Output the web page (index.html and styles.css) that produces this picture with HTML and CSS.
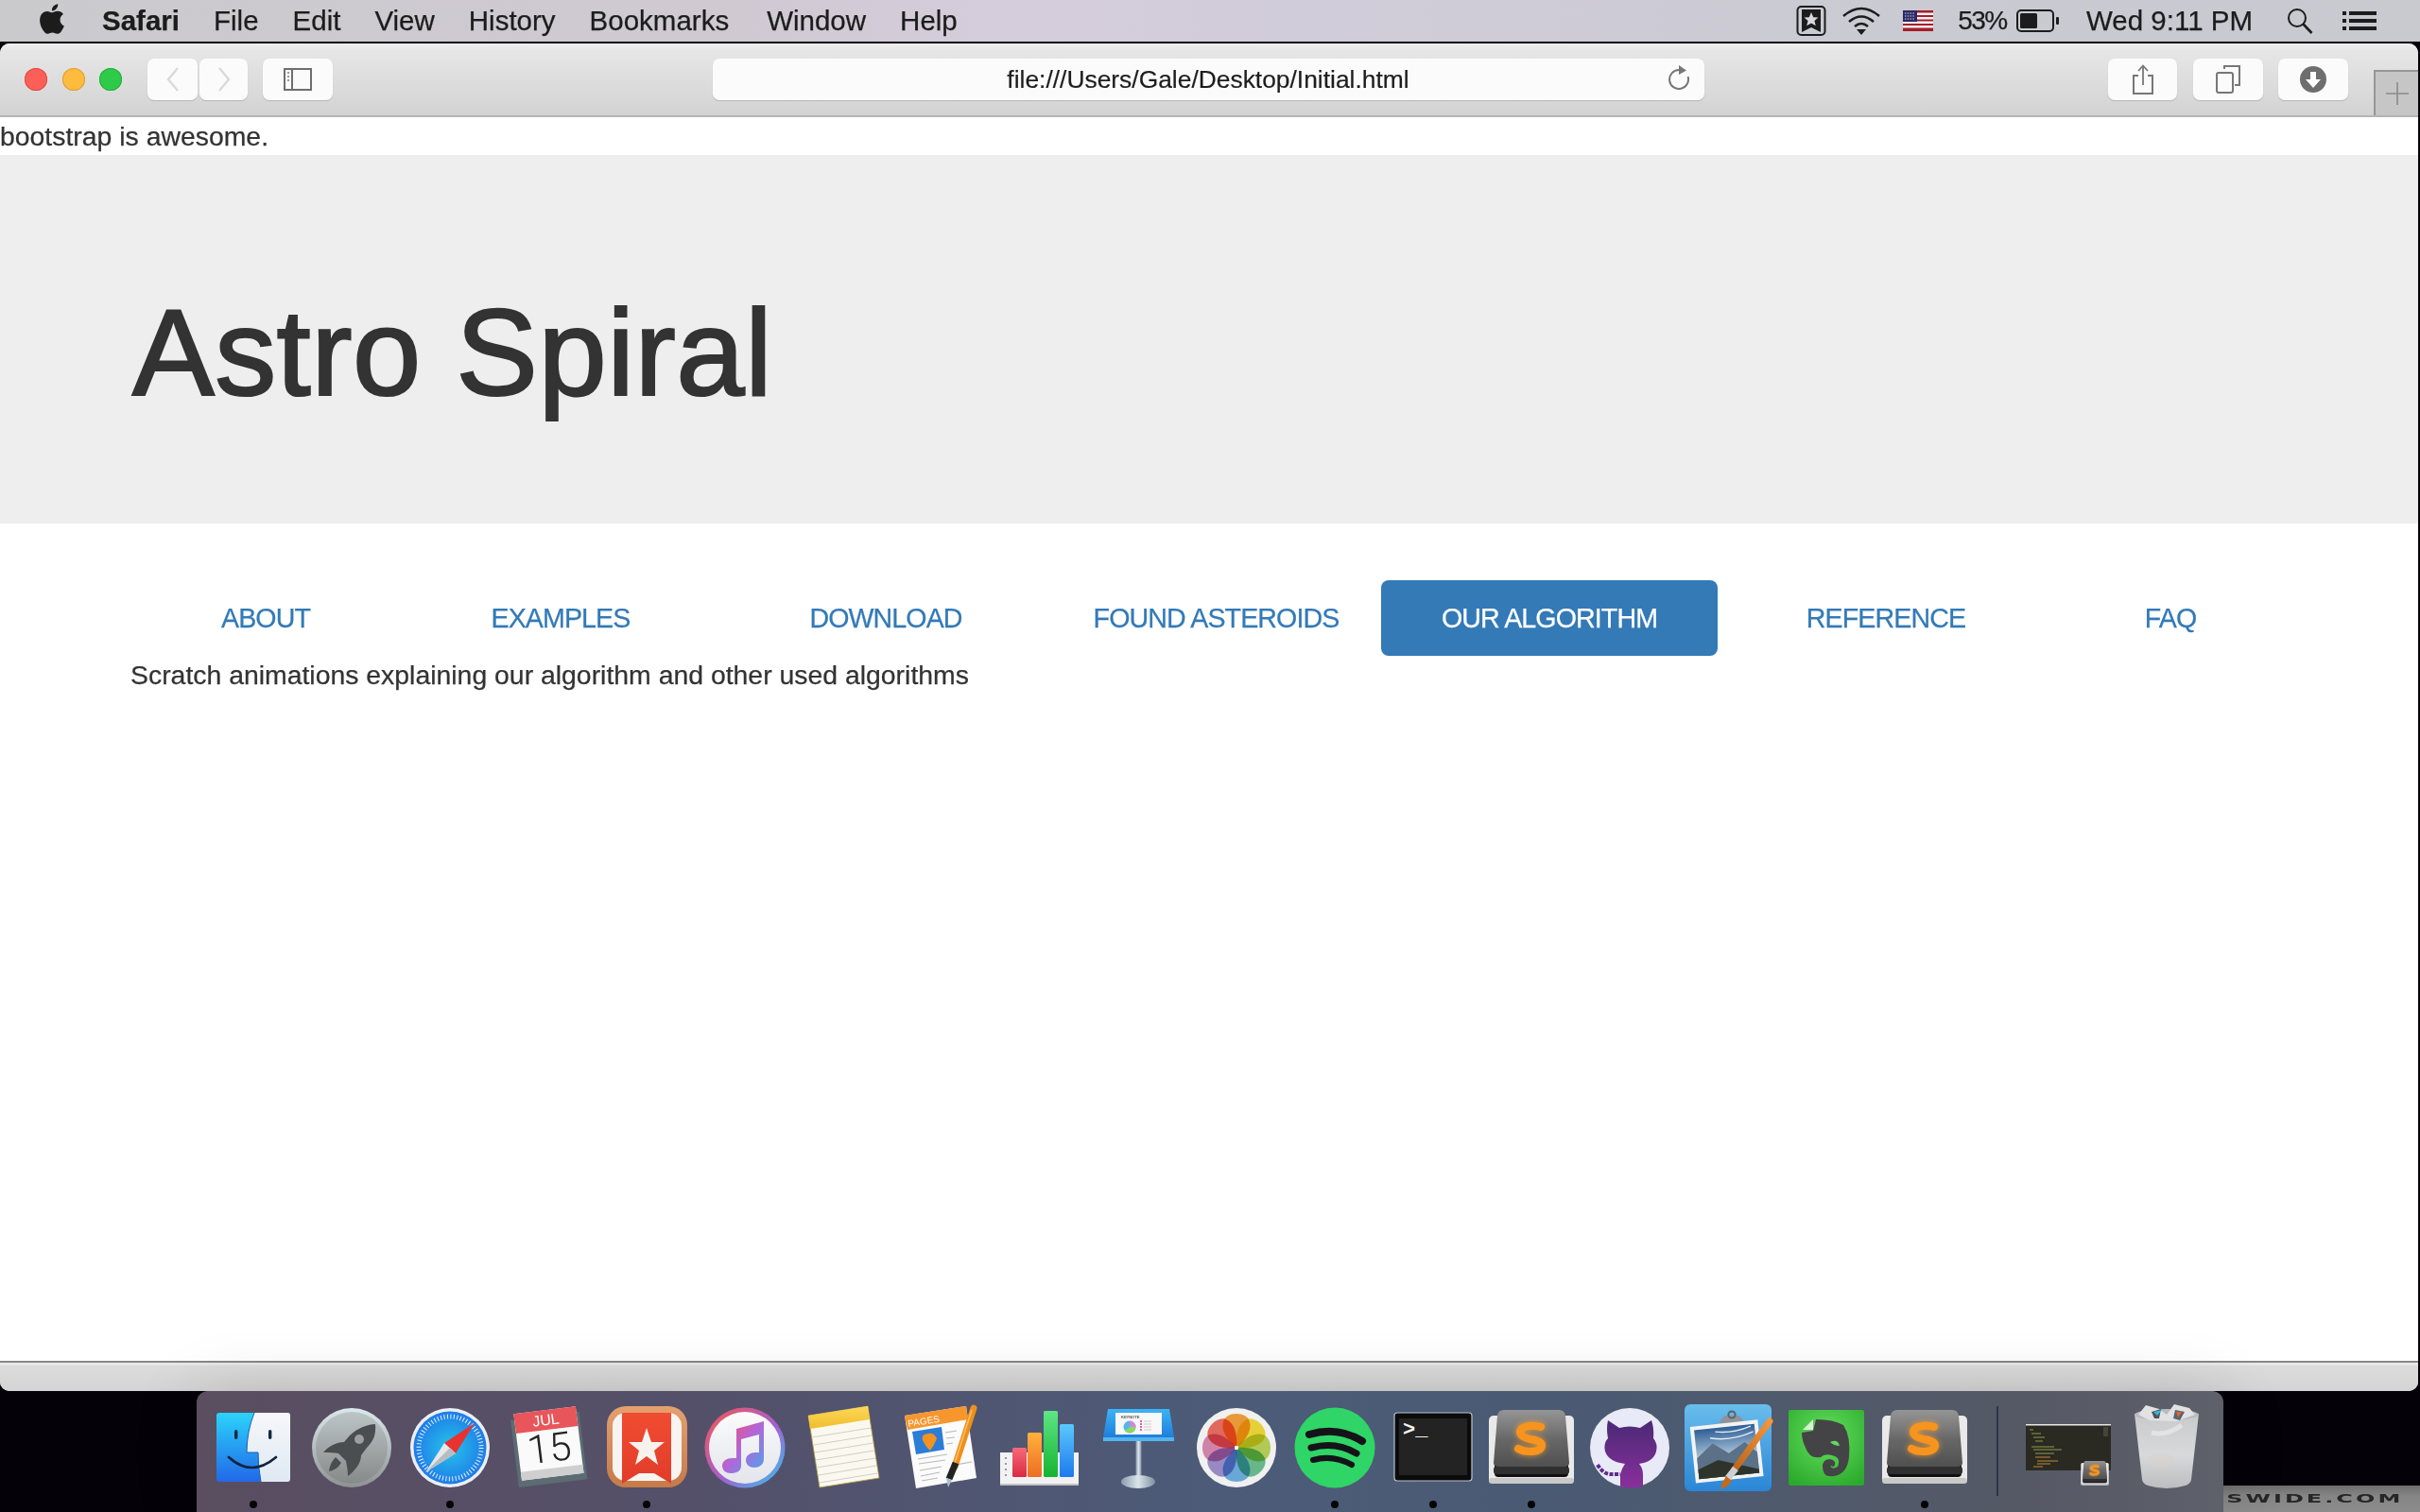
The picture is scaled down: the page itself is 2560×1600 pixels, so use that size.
FILE: index.html
```html
<!DOCTYPE html>
<html lang="en">
<head>
<meta charset="utf-8">
<title>Astro Spiral</title>
<link rel="stylesheet" href="styles.css">
</head>
<body>
<svg class="defs" width="0" height="0" aria-hidden="true">
  <defs>
    <linearGradient id="gFinderL" x1="0" y1="0" x2="0" y2="1"><stop offset="0" stop-color="#2bd3fb"/><stop offset="1" stop-color="#2268e8"/></linearGradient>
    <linearGradient id="gFinderR" x1="0" y1="0" x2="0" y2="1"><stop offset="0" stop-color="#f6f7f9"/><stop offset="1" stop-color="#dfe9f4"/></linearGradient>
    <linearGradient id="gRim" x1="0" y1="0" x2="0" y2="1"><stop offset="0" stop-color="#dbe9ec"/><stop offset="1" stop-color="#8f9293"/></linearGradient>
    <linearGradient id="gLaunch" x1="0" y1="0" x2="0" y2="1"><stop offset="0" stop-color="#bcc5c6"/><stop offset="1" stop-color="#87898a"/></linearGradient>
    <radialGradient id="gSafari" cx=".5" cy=".5" r=".55"><stop offset="0" stop-color="#25c5ea"/><stop offset="1" stop-color="#1f74e8"/></radialGradient>
    <linearGradient id="gWun" x1="0" y1="0" x2="0" y2="1"><stop offset="0" stop-color="#e5a070"/><stop offset="1" stop-color="#c57a48"/></linearGradient>
    <linearGradient id="gRed" x1="0" y1="0" x2="0" y2="1"><stop offset="0" stop-color="#f04c32"/><stop offset="1" stop-color="#e23c29"/></linearGradient>
    <linearGradient id="gTunes" x1="0" y1="0" x2="1" y2="1"><stop offset="0" stop-color="#f9564d"/><stop offset=".55" stop-color="#a45fd0"/><stop offset="1" stop-color="#31c9ee"/></linearGradient>
    <linearGradient id="gTunesIn" x1="0" y1="0" x2="0" y2="1"><stop offset="0" stop-color="#fbfbfb"/><stop offset="1" stop-color="#e3e5ec"/></linearGradient>
    <linearGradient id="gNote" x1="0" y1="0" x2="1" y2="1"><stop offset="0" stop-color="#fb4a68"/><stop offset=".5" stop-color="#b266d8"/><stop offset="1" stop-color="#4aa4ee"/></linearGradient>
    <linearGradient id="gYel" x1="0" y1="0" x2="0" y2="1"><stop offset="0" stop-color="#fdd85a"/><stop offset="1" stop-color="#f0bd2c"/></linearGradient>
    <linearGradient id="gOrange" x1="0" y1="0" x2="0" y2="1"><stop offset="0" stop-color="#ffb13a"/><stop offset="1" stop-color="#ee6d26"/></linearGradient>
    <linearGradient id="gBrush" x1="1" y1="0" x2="0" y2="1"><stop offset="0" stop-color="#f3953a"/><stop offset="1" stop-color="#b9651a"/></linearGradient>
    <linearGradient id="gBarR" x1="0" y1="0" x2="0" y2="1"><stop offset="0" stop-color="#f6697a"/><stop offset="1" stop-color="#db2a40"/></linearGradient>
    <linearGradient id="gBarG" x1="0" y1="0" x2="0" y2="1"><stop offset="0" stop-color="#5ee585"/><stop offset="1" stop-color="#15b431"/></linearGradient>
    <linearGradient id="gBarB" x1="0" y1="0" x2="0" y2="1"><stop offset="0" stop-color="#5ac9fb"/><stop offset="1" stop-color="#1d79ee"/></linearGradient>
    <linearGradient id="gKey" x1="0" y1="0" x2="0" y2="1"><stop offset="0" stop-color="#3cb4f5"/><stop offset="1" stop-color="#1f7edb"/></linearGradient>
    <linearGradient id="gStem" x1="0" y1="0" x2="1" y2="0"><stop offset="0" stop-color="#8a9cad"/><stop offset=".5" stop-color="#dbe4ea"/><stop offset="1" stop-color="#7e8f9e"/></linearGradient>
    <linearGradient id="gSub" x1="0" y1="0" x2="0" y2="1"><stop offset="0" stop-color="#959595"/><stop offset=".45" stop-color="#6e6e6e"/><stop offset=".5" stop-color="#686868"/><stop offset="1" stop-color="#505050"/></linearGradient>
    <linearGradient id="gCat" x1="0" y1="0" x2="0" y2="1"><stop offset="0" stop-color="#4a2a76"/><stop offset="1" stop-color="#8a2f9c"/></linearGradient>
    <linearGradient id="gPrev" x1="0" y1="0" x2="0" y2="1"><stop offset="0" stop-color="#69bdec"/><stop offset="1" stop-color="#2a86d6"/></linearGradient>
    <linearGradient id="gSky" x1="0" y1="0" x2="0" y2="1"><stop offset="0" stop-color="#2e5f96"/><stop offset=".55" stop-color="#a9c0d6"/><stop offset="1" stop-color="#39403a"/></linearGradient>
    <radialGradient id="gEver" cx=".5" cy=".35" r=".75"><stop offset="0" stop-color="#66e060"/><stop offset="1" stop-color="#2aa92a"/></radialGradient>
    <linearGradient id="gTrash" x1="0" y1="0" x2="0" y2="1"><stop offset="0" stop-color="#c9cacd"/><stop offset=".55" stop-color="#d8d9da"/><stop offset="1" stop-color="#bcbdc0"/></linearGradient>

    <symbol id="sublime" viewBox="0 0 104 104">
      <rect x="7" y="18" width="90" height="72" rx="5" fill="#e9e9e9"/>
      <rect x="7" y="84" width="90" height="6" rx="3" fill="#c9c9c9"/>
      <rect x="13" y="62" width="78" height="21" rx="4" fill="#111"/>
      <path d="M23 12 H81 Q87 12 88 18 L92 68 Q92 72 87 72 H17 Q12 72 12 68 L16 18 Q17 12 23 12 Z" fill="url(#gSub)"/>
      <rect x="12" y="72" width="80" height="8" rx="3" fill="#2f2f2f"/>
      <path d="M62 30 Q56 28 50 29 Q40 30 40 36 Q41 41 51 43 Q64 45 63 50 Q62 56 50 56 Q43 56 38 53" class="sub-glow" fill="none" stroke="#f7941e" stroke-width="8" stroke-linecap="round"/>
    </symbol>
  </defs>
</svg>

<header class="menubar">
  <svg class="apple" viewBox="0 0 24 24" width="38" height="38"><path fill="#1c1c1c" d="M18.71 19.5c-.83 1.24-1.71 2.45-3.05 2.47-1.34.03-1.77-.79-3.29-.79-1.53 0-2 .77-3.27.82-1.31.05-2.3-1.32-3.14-2.53C4.25 17 2.94 12.45 4.7 9.39c.87-1.52 2.43-2.48 4.12-2.51 1.28-.02 2.5.87 3.29.87.78 0 2.26-1.07 3.81-.91.65.03 2.47.26 3.64 1.98-.09.06-2.17 1.28-2.15 3.81.03 3.02 2.65 4.03 2.68 4.04-.03.07-.42 1.44-1.38 2.83M13 3.5c.73-.83 1.94-1.46 2.94-1.5.13 1.17-.34 2.35-1.04 3.19-.69.85-1.83 1.51-2.95 1.42-.15-1.15.41-2.35 1.05-3.11z"/></svg>
  <nav class="menu-left">
    <span class="app-name">Safari</span><span>File</span><span>Edit</span><span>View</span><span>History</span><span>Bookmarks</span><span class="menu-window">Window</span><span>Help</span>
  </nav>
  <div class="menu-right">
    <svg class="st-mark" viewBox="0 0 32 32" width="32" height="32"><rect x="1.5" y="1" width="29" height="30" rx="4" fill="none" stroke="#1c1c1c" stroke-width="2"/><path d="M6 4 H26 V28 L16 23 L6 28 Z" fill="#1c1c1c"/><path d="M16 7 L18.2 12.2 L23.5 12.6 L19.4 16 L20.8 21.2 L16 18.5 L11.2 21.2 L12.6 16 L8.5 12.6 L13.8 12.2 Z" fill="#d8d8de"/></svg>
    <svg class="st-wifi" viewBox="0 0 42 30" width="42" height="30"><g fill="none" stroke="#1c1c1c" stroke-width="2.6"><path d="M2 10 Q21 -6 40 10"/><path d="M8 16 Q21 5 34 16"/><path d="M14 21 Q21 15 28 21"/></g><path d="M21 30 L16 24 H26 Z" fill="#1c1c1c"/></svg>
    <svg class="st-flag" viewBox="0 0 32 22" width="32" height="22"><rect width="32" height="22" fill="#f3f3f3"/><g fill="#a81c28"><rect width="32" height="2.5"/><rect y="5" width="32" height="2"/><rect y="9.5" width="32" height="2"/><rect y="14" width="32" height="2"/><rect y="18.5" width="32" height="3.5"/></g><rect width="15" height="12" fill="#2a2a66"/><path d="M2 3h11M2 6h11M2 9h11" stroke="#e6e6f0" stroke-width="1.2" stroke-dasharray="1.4 1.4"/></svg>
    <span class="st-pct">53%</span>
    <svg class="st-batt" viewBox="0 0 47 24" width="47" height="24"><rect x="1" y="1" width="38" height="22" rx="4" fill="none" stroke="#1c1c1c" stroke-width="2"/><rect x="4" y="4" width="18" height="16" rx="1.5" fill="#1c1c1c"/><rect x="42" y="8" width="3" height="8" rx="1" fill="#1c1c1c"/></svg>
    <span class="st-time">Wed 9:11 PM</span>
    <svg class="st-search" viewBox="0 0 28 28" width="28" height="28"><circle cx="11" cy="11" r="9" fill="none" stroke="#1c1c1c" stroke-width="2"/><path d="M17.5 17.5 L26.5 27" stroke="#1c1c1c" stroke-width="2.6"/></svg>
    <svg class="st-list" viewBox="0 0 36 20" width="36" height="20"><g fill="#1c1c1c"><rect width="4" height="4"/><rect y="8" width="4" height="4"/><rect y="16" width="4" height="4"/><rect x="7" width="29" height="4"/><rect x="7" y="8" width="29" height="4"/><rect x="7" y="16" width="29" height="4"/></g></svg>
  </div>
</header>

<main class="window">
  <div class="toolbar">
    <div class="lights"><i class="light red"></i><i class="light yellow"></i><i class="light green"></i></div>
    <div class="btn btn-back"><svg viewBox="0 0 16 28" width="16" height="28"><path d="M13 2 L3 14 L13 26" fill="none" stroke="#dadada" stroke-width="2.4"/></svg></div>
    <div class="btn btn-fwd"><svg viewBox="0 0 16 28" width="16" height="28"><path d="M3 2 L13 14 L3 26" fill="none" stroke="#dadada" stroke-width="2.4"/></svg></div>
    <div class="btn btn-side"><svg viewBox="0 0 30 24" width="30" height="24"><rect x="1" y="1" width="28" height="22" fill="none" stroke="#6e6e6e" stroke-width="2"/><path d="M9 1 V23" stroke="#6e6e6e" stroke-width="2"/><path d="M4 5h2M4 9h2M4 13h2" stroke="#9a9a9a" stroke-width="2"/></svg></div>
    <div class="btn url">
      <span class="url-text">file:///Users/Gale/Desktop/Initial.html</span>
      <svg class="reload" viewBox="0 0 24 30" width="24" height="30"><path d="M11 6 A10 10 0 1 0 20.6 13" fill="none" stroke="#777" stroke-width="2"/><path d="M11 1 L19 6.5 L11 11 Z" fill="#777"/></svg>
    </div>
    <div class="btn btn-share"><svg viewBox="0 0 24 32" width="24" height="32"><path d="M7 12 H2 V31 H22 V12 H17" fill="none" stroke="#777" stroke-width="2"/><path d="M12 22 V2 M7 7 L12 1.5 L17 7" fill="none" stroke="#777" stroke-width="1.8"/></svg></div>
    <div class="btn btn-tabs"><svg viewBox="0 0 26 30" width="26" height="30"><rect x="1" y="8" width="17" height="21" rx="2" fill="none" stroke="#777" stroke-width="2"/><path d="M9 4 V1 H25 V21 H20" fill="none" stroke="#777" stroke-width="2"/></svg></div>
    <div class="btn btn-dl"><svg viewBox="0 0 30 30" width="30" height="30"><circle cx="15" cy="15" r="14" fill="#6e6e6e"/><path d="M12 7 H18 V15 H23 L15 24 L7 15 H12 Z" fill="#fff"/></svg></div>
    <div class="newtab"><svg viewBox="0 0 24 24" width="24" height="24"><path d="M12 0 V24 M0 12 H24" stroke="#8a8a8a" stroke-width="1.6"/></svg></div>
  </div>

  <div class="page">
    <div class="note">bootstrap is awesome.</div>
    <section class="jumbotron"><h1>Astro Spiral</h1></section>
    <ul class="pills">
      <li><a>ABOUT</a></li>
      <li><a>EXAMPLES</a></li>
      <li><a>DOWNLOAD</a></li>
      <li><a>FOUND ASTEROIDS</a></li>
      <li class="active"><a>OUR ALGORITHM</a></li>
      <li><a>REFERENCE</a></li>
      <li><a>FAQ</a></li>
    </ul>
    <p class="tab-text">Scratch animations explaining our algorithm and other used algorithms</p>
  </div>

  <div class="window-bottom"></div>
</main>

<footer class="bottom">
  <div class="side"></div>
  <div class="dock">
    <div class="dock-item">
      <svg viewBox="0 0 104 104" class="ico"><rect x="13" y="15" width="78" height="73" rx="3" fill="url(#gFinderL)"/><path d="M53 15 H88 Q91 15 91 18 V85 Q91 88 88 88 H60 Q57 72 57 57 H45 Q45 35 53 15 Z" fill="url(#gFinderR)"/><path d="M53 15 Q45 35 45 57 H57 Q57 72 60 88" fill="none" stroke="#1a5fb0" stroke-width="1"/><rect x="32" y="33" width="3.4" height="10" rx="1.7" fill="#142a44"/><rect x="68" y="33" width="3.4" height="10" rx="1.7" fill="#142a44"/><path d="M26 62 Q50 84 76 62" fill="none" stroke="#11243c" stroke-width="2.6" stroke-linecap="round"/></svg>
      <i class="dot"></i>
    </div>
    <div class="dock-item">
      <svg viewBox="0 0 104 104" class="ico"><circle cx="52" cy="52" r="42" fill="url(#gRim)"/><circle cx="52" cy="52" r="38" fill="url(#gLaunch)"/><path d="M77 27 C78 38 75 45 68 52 L62 60 C62 68 56 76 48 82 C48 76 47 72 46 66 L38 58 C34 57 28 57 22 57 C28 50 36 46 44 46 L50 39 C58 31 70 27 77 27 Z" fill="#4a4e50"/><path d="M35 62 L41 68 Q36 76 28 77 Q29 68 35 62 Z" fill="#4a4e50"/><circle cx="60" cy="43" r="5" fill="#9a9fa1"/></svg>
    </div>
    <div class="dock-item">
      <svg viewBox="0 0 104 104" class="ico"><circle cx="52" cy="52" r="42" fill="#eceff2"/><circle cx="52" cy="52" r="38.5" fill="url(#gSafari)"/><circle cx="52" cy="52" r="33" fill="none" stroke="#e9f4fc" stroke-width="5" stroke-dasharray="1 2.46"/><path d="M78 26 L46 47 L58 58 Z" fill="#e9312f"/><path d="M26 78 L46 47 L58 58 Z" fill="#e6e8ea"/><path d="M26 78 L52 52 L58 58 Z" fill="#b7bcc1"/></svg>
      <i class="dot"></i>
    </div>
    <div class="dock-item">
      <svg viewBox="0 0 104 104" class="ico"><g transform="rotate(-7 52 52)"><rect x="16" y="18" width="73" height="72" fill="#5c6c72"/><rect x="20" y="12" width="66" height="71" fill="#fafafa"/><rect x="20" y="74" width="66" height="9" fill="#cfcfcf"/><rect x="20" y="12" width="66" height="21" fill="#e8555a"/><text x="53" y="28" class="cal-mon">JUL</text><text x="53" y="67" class="cal-day">15</text></g></svg>
    </div>
    <div class="dock-item">
      <svg viewBox="0 0 104 104" class="ico"><rect x="10" y="8" width="85" height="86" rx="20" fill="url(#gWun)"/><rect x="16" y="15" width="73" height="72" rx="14" fill="#f7f4f2"/><path d="M26 15 H78 V90 L60 79 H44 L26 90 Z" fill="url(#gRed)"/><path d="M52 31 L57 46 L71 46 L60 55 L64 70 L52 61 L40 70 L44 55 L33 46 L47 46 Z" fill="#f8f2ef"/></svg>
      <i class="dot"></i>
    </div>
    <div class="dock-item">
      <svg viewBox="0 0 104 104" class="ico"><circle cx="52" cy="52" r="42.5" fill="url(#gTunes)"/><circle cx="52" cy="52" r="38" fill="url(#gTunesIn)"/><path d="M43 32 L72 24 V64 C72 70 67 73 62 73 C57 73 53 70 53 65 C53 60 58 57 63 57 L67 57 V38 L48 43 V71 C48 77 43 79 37 79 C32 79 28 76 28 71 C28 66 33 63 38 63 L43 63 Z" fill="url(#gNote)"/></svg>
    </div>
    <div class="dock-item">
      <svg viewBox="0 0 104 104" class="ico"><polygon points="15,18 78,8 90,84 27,94" fill="#fbf9ef" stroke="#b59a3c" stroke-width=".8"/><polygon points="15,18 78,8 80,22 17,32" fill="url(#gYel)"/><g stroke="#cfcfc9" stroke-width="1"><path d="M19 41 L81 31"/><path d="M21 49 L82 39"/><path d="M22 57 L84 47"/><path d="M23 65 L85 55"/><path d="M24 73 L86 63"/><path d="M26 81 L87 71"/><path d="M27 89 L88 79"/></g></svg>
    </div>
    <div class="dock-item">
      <svg viewBox="0 0 104 104" class="ico"><polygon points="13,18 78,8 89,84 25,95" fill="#fbfbfb"/><polygon points="13,18 78,8 80,22 16,33" fill="#f7962c"/><text x="17" y="30" transform="rotate(-9 17 30)" class="pages-t">PAGES</text><polygon points="21,35 52,30 55,54 25,59" fill="#2b7dd6"/><path d="M38 37 Q30 38 32 44 Q36 52 40 55 Q44 50 47 42 Q44 36 38 37 Z" fill="#f39220"/><g stroke="#b9b9b9" stroke-width="1.2"><path d="M56 36 L68 34"/><path d="M57 42 L66 41"/><path d="M57 48 L64 47"/><path d="M27 64 L58 59"/><path d="M28 69 L56 65"/><path d="M29 76 L52 72"/><path d="M30 82 L50 78"/><path d="M31 87 L48 84"/><path d="M67 70 L84 67"/></g><path d="M86 10 L66 72" stroke="#ee8f1d" stroke-width="7" stroke-linecap="round"/><path d="M84 12 L66 68" stroke="#fdbf5f" stroke-width="1.6"/><path d="M67 68 L60 85" stroke="#222" stroke-width="7"/><path d="M57 84 L63 86 L59 94 Z" fill="#a9bfd0"/></svg>
    </div>
    <div class="dock-item">
      <svg viewBox="0 0 104 104" class="ico"><rect x="10" y="57" width="83" height="35" fill="#f2f2f2"/><rect x="10" y="90" width="83" height="2" fill="#c2c2c2"/><path d="M16 62v2M16 68v2M16 74v2M16 80v2" stroke="#999" stroke-width="2"/><rect x="23" y="52" width="15" height="31" rx="1.5" fill="url(#gBarR)"/><rect x="39" y="36" width="15" height="47" rx="1.5" fill="url(#gOrange)"/><rect x="56" y="13" width="15" height="70" rx="1.5" fill="url(#gBarG)"/><rect x="73" y="27" width="15" height="56" rx="1.5" fill="url(#gBarB)"/></svg>
    </div>
    <div class="dock-item">
      <svg viewBox="0 0 104 104" class="ico"><rect x="49.5" y="44" width="6" height="40" fill="url(#gStem)"/><ellipse cx="52" cy="88" rx="18" ry="7" fill="url(#gStem)"/><path d="M20 11 H85 L90 41 H15 Z" fill="url(#gKey)"/><rect x="15" y="41" width="75" height="4" fill="#54b4ee"/><rect x="28" y="15" width="49" height="23" fill="#f8f8f8"/><text x="34" y="20.5" class="key-t">KEYNOTE</text><circle cx="43" cy="30" r="6.5" fill="#54b6ef"/><path d="M43 30 V23.5 A6.5 6.5 0 0 1 49.5 30 Z" fill="#d983e0"/><path d="M43 30 H49.5 A6.5 6.5 0 0 1 38 34 Z" fill="#8cd85e"/><path d="M54 24h2M54 27h2M54 30h2M54 33h2" stroke="#e05fb0" stroke-width="2"/><path d="M58 24h8M58 27h8M58 30h8M58 33h8" stroke="#ccc" stroke-width="1"/></svg>
    </div>
    <div class="dock-item">
      <svg viewBox="0 0 104 104" class="ico"><circle cx="52" cy="52" r="42" fill="#f0f0f0"/><g class="petals"><path d="M52 52 C40 42 36 32 38 25 C40 13 64 13 66 25 C68 32 64 42 52 52 Z" fill="#f7a33c"/><path d="M52 52 C40 42 36 32 38 25 C40 13 64 13 66 25 C68 32 64 42 52 52 Z" fill="#f5dd3d" transform="rotate(45 52 52)"/><path d="M52 52 C40 42 36 32 38 25 C40 13 64 13 66 25 C68 32 64 42 52 52 Z" fill="#bcd65b" transform="rotate(90 52 52)"/><path d="M52 52 C40 42 36 32 38 25 C40 13 64 13 66 25 C68 32 64 42 52 52 Z" fill="#6fc296" transform="rotate(135 52 52)"/><path d="M52 52 C40 42 36 32 38 25 C40 13 64 13 66 25 C68 32 64 42 52 52 Z" fill="#6fb3e4" transform="rotate(180 52 52)"/><path d="M52 52 C40 42 36 32 38 25 C40 13 64 13 66 25 C68 32 64 42 52 52 Z" fill="#a193d0" transform="rotate(225 52 52)"/><path d="M52 52 C40 42 36 32 38 25 C40 13 64 13 66 25 C68 32 64 42 52 52 Z" fill="#dd8bb4" transform="rotate(270 52 52)"/><path d="M52 52 C40 42 36 32 38 25 C40 13 64 13 66 25 C68 32 64 42 52 52 Z" fill="#ef6f63" transform="rotate(315 52 52)"/></g><circle cx="52" cy="52" r="2.2" fill="#fff"/></svg>
    </div>
    <div class="dock-item">
      <svg viewBox="0 0 104 104" class="ico"><circle cx="52" cy="52" r="42.5" fill="#2fd566"/><g fill="none" stroke="#15131a" stroke-linecap="round"><path d="M25 38 Q55 29 81 45" stroke-width="8"/><path d="M27 52 Q53 45 75 58" stroke-width="7"/><path d="M29 65 Q50 59 70 70" stroke-width="6"/></g></svg>
      <i class="dot"></i>
    </div>
    <div class="dock-item">
      <svg viewBox="0 0 104 104" class="ico"><rect x="11" y="15" width="82" height="72" rx="3" fill="#0b0b0b" stroke="#b9c4cc" stroke-width="1.2"/><rect x="16" y="21" width="72" height="60" fill="#232323"/><text x="20" y="39" class="term-t">&gt;_</text></svg>
      <i class="dot"></i>
    </div>
    <div class="dock-item">
      <svg viewBox="0 0 104 104" class="ico"><use href="#sublime"/></svg>
      <i class="dot"></i>
    </div>
    <div class="dock-item">
      <svg viewBox="0 0 104 104" class="ico"><circle cx="52" cy="52" r="42" fill="#e8eaf7"/><path d="M29 23 L41 31 Q52 28 63 31 L75 23 Q78 32 77 42 Q82 48 80 56 Q77 67 62 69 Q66 74 66 80 V93 Q52 96 42 93 V80 Q44 73 47 69 Q30 67 26 56 Q24 47 29 42 Q27 32 29 23 Z" fill="url(#gCat)"/><path d="M18 70 Q24 80 32 80 L42 80" fill="none" stroke="#5e2d85" stroke-width="4" stroke-dasharray="4 1.5"/></svg>
    </div>
    <div class="dock-item">
      <svg viewBox="0 0 104 104" class="ico"><rect x="6" y="6" width="92" height="92" rx="6" fill="url(#gPrev)"/><path d="M42 26 L70 26 L64 18 H48 Z" fill="#8c959c"/><circle cx="56" cy="17" r="3.6" fill="none" stroke="#5b636a" stroke-width="2"/><g transform="rotate(-6 50 50)"><rect x="14" y="26" width="72" height="60" fill="#f3f3f3"/><rect x="18" y="30" width="64" height="52" fill="url(#gSky)"/><path d="M40 34 Q58 38 78 32 M34 40 Q56 46 80 38" fill="none" stroke="#e2ecf4" stroke-width="1.4"/><path d="M18 60 L36 46 L52 58 L70 48 L82 60 V82 H18 Z" fill="#5b7188"/><path d="M18 72 L40 64 L82 78 V82 H18 Z" fill="#2e342b"/></g><path d="M96 24 L58 76" stroke="url(#gBrush)" stroke-width="7" stroke-linecap="round"/><path d="M60 74 L52 84" stroke="#ccd0d4" stroke-width="7"/><path d="M50 82 L56 87 Q52 94 44 96 Q46 88 50 82 Z" fill="#c66a16"/></svg>
    </div>
    <div class="dock-item">
      <svg viewBox="0 0 104 104" class="ico"><rect x="12" y="12" width="80" height="80" rx="2" fill="url(#gEver)"/><path d="M41 22 Q60 22 70 28 Q78 40 76 62 Q74 80 60 82 Q48 84 48 72 Q48 64 56 64 Q64 66 60 72 L56 71 Q58 76 64 72 Q68 62 58 60 Q50 58 46 62 Q34 64 30 52 Q26 44 26 36 L38 34 Z" fill="#444447"/><path d="M27 33 L38 22 V33 Z" fill="#d8f0d4"/><path d="M56 46 Q64 42 66 50 Q60 50 56 46 Z" fill="#66d662"/></svg>
    </div>
    <div class="dock-item">
      <svg viewBox="0 0 104 104" class="ico"><use href="#sublime"/></svg>
      <i class="dot"></i>
    </div>
    <div class="dock-sep"><i class="sep-line"></i></div>
    <div class="dock-item">
      <svg viewBox="0 0 104 104" class="ico"><rect x="6" y="27" width="90" height="49" fill="#2a2a22"/><rect x="6" y="27" width="90" height="1.5" fill="#e8e8e8"/><g stroke-width="1"><path d="M10 33h4M12 37h10M14 41h12M16 45h8M12 51h24M14 54h30M16 58h20" stroke="#8f9a4a"/><path d="M16 62h16M18 66h22M18 69h14M14 72h10" stroke="#c2893a"/></g><rect x="88" y="30" width="5" height="10" fill="#44443a"/><svg x="60" y="62" width="38" height="34" viewBox="0 0 104 104"><use href="#sublime"/></svg></svg>
    </div>
    <div class="dock-item trash-item">
      <svg viewBox="0 0 104 104" class="ico"><path d="M18 16 Q52 24 86 16 L78 86 Q77 90 72 92 Q52 98 32 92 Q27 90 26 86 Z" fill="url(#gTrash)"/><ellipse cx="52" cy="17" rx="34" ry="6" fill="#b9bbbe"/><path d="M22 17 L30 7 L44 11 L52 17 L60 6 L76 10 L82 17 L62 24 L34 23 Z" fill="#e2e2e2"/><path d="M36 14 L46 11 L44 21 L39 21 Z" fill="#4d5558"/><path d="M38 14 L47 12 L42 18 Z" fill="#36b4e6"/><path d="M61 12 L71 14 L66 23 L59 21 Z" fill="#5a6270"/><path d="M62 14 L68 14 L64 20 Z" fill="#d96a2c"/><path d="M36 36 Q52 40 68 28" fill="none" stroke="#efefef" stroke-width="5" opacity=".6"/><ellipse cx="46" cy="66" rx="14" ry="8" fill="#d8d2cd" opacity=".5"/></svg>
    </div>
  </div>
  <div class="side side-right"><div class="watermark"><span class="wm-text">SWIDE.COM</span></div></div>
</footer>
</body>
</html>
```

FILE: styles.css
```css
* { box-sizing: border-box; }

html, body {
  margin: 0;
  height: 100%;
}

body {
  width: 2560px;
  height: 1600px;
  overflow: hidden;
  display: flex;
  flex-direction: column;
  background: #040208;
  font-family: "Liberation Sans", Arial, sans-serif;
  color: #333;
}

.defs { position: absolute; }

/* menu bar */
.menubar {
  height: 46px;
  flex: none;
  display: flex;
  align-items: flex-start;
  padding-left: 36px;
  border-bottom: 2px solid #050505;
  background: linear-gradient(90deg, #cacacd 0%, #d0c9d2 30%, #d5cddc 42%, #c9cad2 80%, #c9cad0 100%);
  font-size: 29.5px;
  color: #1c1c1c;
  -webkit-text-stroke: 0.25px #1c1c1c;
}

.apple { margin-top: 1px; flex: none; }

.menu-left {
  display: flex;
  gap: 36px;
  margin-left: 34px;
  line-height: 44px;
}

.menu-window { margin-left: 4px; }

.app-name { font-weight: 700; }

.menu-right {
  margin-left: auto;
  display: flex;
  align-items: center;
  height: 44px;
  padding-right: 46px;
}

.st-wifi { margin-left: 16px; }
.st-flag { margin-left: 23px; }
.st-pct { margin-left: 26px; font-size: 28px; letter-spacing: -1.6px; }
.st-batt { margin-left: 10px; }
.st-time { margin-left: 27.5px; }
.st-search { margin-left: 36px; }
.st-list { margin-left: 31px; }

/* window */
.window {
  flex: 1;
  width: 2558px;
  display: flex;
  flex-direction: column;
  background: #fff;
  border-radius: 10px;
  overflow: hidden;
}

.toolbar {
  height: 78px;
  flex: none;
  display: flex;
  align-items: flex-start;
  padding-top: 16px;
  padding-left: 26px;
  position: relative;
  background: linear-gradient(180deg, #eeeeee 0%, #e6e6e6 10%, #d3d3d3 100%);
  border-bottom: 2px solid #b4b4b4;
}

.lights {
  display: flex;
  gap: 15.5px;
  margin-top: 10px;
}

.light {
  width: 24px;
  height: 24px;
  border-radius: 50%;
  display: block;
}

.red { background: #fc5f57; box-shadow: inset 0 0 0 1px #e24a43; }
.yellow { background: #fdbb40; box-shadow: inset 0 0 0 1px #df9e2c; }
.green { background: #2ecb4a; box-shadow: inset 0 0 0 1px #23ae38; }

.btn {
  height: 44px;
  background: #fbfbfb;
  border-radius: 7px;
  box-shadow: 0 1px 1px #b5b5b5;
  display: flex;
  align-items: center;
  justify-content: center;
  flex: none;
}

.btn-back { width: 53px; margin-left: 27px; }
.btn-fwd { width: 51px; margin-left: 2px; }
.btn-side { width: 74px; margin-left: 16px; }

.url {
  width: 1049px;
  margin-left: 402px;
  position: relative;
}

.url-text {
  font-size: 26.4px;
  color: #1d1d1d;
  margin-left: -1px;
  -webkit-text-stroke: 0.2px #1d1d1d;
}

.reload {
  position: absolute;
  right: 14px;
  top: 6px;
}

.btn-share { width: 73px; margin-left: 427px; }
.btn-tabs { width: 74px; margin-left: 17px; }
.btn-dl { width: 74px; margin-left: 16px; }

.newtab {
  position: absolute;
  right: 0;
  top: 28px;
  width: 47px;
  height: 48px;
  background: #c6c6c6;
  border-left: 2px solid #969696;
  border-top: 2px solid #969696;
  display: flex;
  align-items: center;
  justify-content: center;
}

/* page content */
.page {
  flex: 1;
  background: #fff;
  font-size: 28.4px;
  line-height: 40px;
  -webkit-text-stroke: 0.25px currentColor;
}

.note { height: 40px; }

.jumbotron {
  height: 390px;
  background: #eee;
  padding: 134px 0 0 140px;
}

.jumbotron h1 {
  margin: 0;
  font-size: 130px;
  font-weight: 400;
  line-height: 150px;
  letter-spacing: 0.45px;
  color: #333;
  -webkit-text-stroke: 2.2px #333;
}

.pills {
  list-style: none;
  margin: 60px 0 0;
  padding: 0 0 0 138px;
  display: grid;
  grid-template-columns: 286px 338px 350px 349px 356px 356px 246px;
}

.pills a {
  display: flex;
  height: 80px;
  align-items: center;
  justify-content: center;
  border-radius: 8px;
  color: #337ab7;
  font-size: 28.6px;
  letter-spacing: -0.9px;
}

.pills .active a {
  background: #337ab7;
  color: #fff;
}

.tab-text {
  margin: 0;
  padding-left: 138px;
  height: 40px;
}

.window-bottom {
  height: 32px;
  flex: none;
  border-top: 2px solid #878787;
  background: linear-gradient(180deg, #e9e9e9 0, #e9e9e9 2px, #dcdcdc 3px, #d4d4d4 100%);
}

/* bottom row with dock */
.bottom {
  height: 128px;
  flex: none;
  display: flex;
}

.side {
  width: 208px;
  flex: none;
}

.side-right {
  display: flex;
  flex-direction: column;
  justify-content: flex-end;
}

.dock {
  width: 2144px;
  flex: none;
  display: flex;
  align-items: flex-start;
  padding: 8px 0 0 8px;
  position: relative;
  border-radius: 12px 12px 0 0;
  background: linear-gradient(90deg, #5a4e60 0%, #54506a 25%, #4c5b78 50%, #4b5a72 70%, #555965 90%, #5e606a 100%);
  box-shadow: 0 0 70px rgba(0, 0, 0, 0.14);
}

.dock-item {
  width: 104px;
  flex: none;
  display: flex;
  flex-direction: column;
  align-items: center;
}

.trash-item { margin-left: -1px; }

.ico {
  width: 104px;
  height: 104px;
  display: block;
}

.dot {
  width: 8px;
  height: 8px;
  margin-top: 4px;
  border-radius: 50%;
  background: #050505;
  display: block;
}

.dock-sep {
  width: 49px;
  flex: none;
  display: flex;
  justify-content: center;
}

.sep-line {
  width: 2px;
  height: 95px;
  margin-top: 8px;
  background: #2d3344;
  display: block;
}

.sub-glow { filter: drop-shadow(0 0 3px rgba(255, 160, 40, 0.8)); }

.petals path { mix-blend-mode: multiply; }

.cal-mon {
  font-size: 16px;
  fill: #fff;
  text-anchor: middle;
  font-family: "Liberation Sans", sans-serif;
}

.cal-day {
  font-size: 42px;
  font-weight: 300;
  fill: #222;
  text-anchor: middle;
  font-family: Roboto, "Liberation Sans", sans-serif;
}

.pages-t {
  font-size: 10px;
  fill: #fff;
  font-family: "Liberation Sans", sans-serif;
}

.key-t {
  font-size: 4px;
  font-weight: 700;
  fill: #555;
  font-family: "Liberation Sans", sans-serif;
}

.term-t {
  font-size: 22px;
  font-weight: 700;
  fill: #f2f2f2;
  font-family: "Liberation Mono", monospace;
}

.watermark {
  height: 28px;
  padding-right: 14px;
  background: linear-gradient(180deg, #6e6e6e 0, #858585 40%, #8c8c8c 100%);
  display: flex;
  align-items: center;
  justify-content: center;
}

.wm-text {
  font-family: "DejaVu Sans", sans-serif;
  font-size: 12px;
  font-weight: 700;
  letter-spacing: 1.5px;
  color: #262626;
  transform: scaleX(2);
  display: block;
}
```
